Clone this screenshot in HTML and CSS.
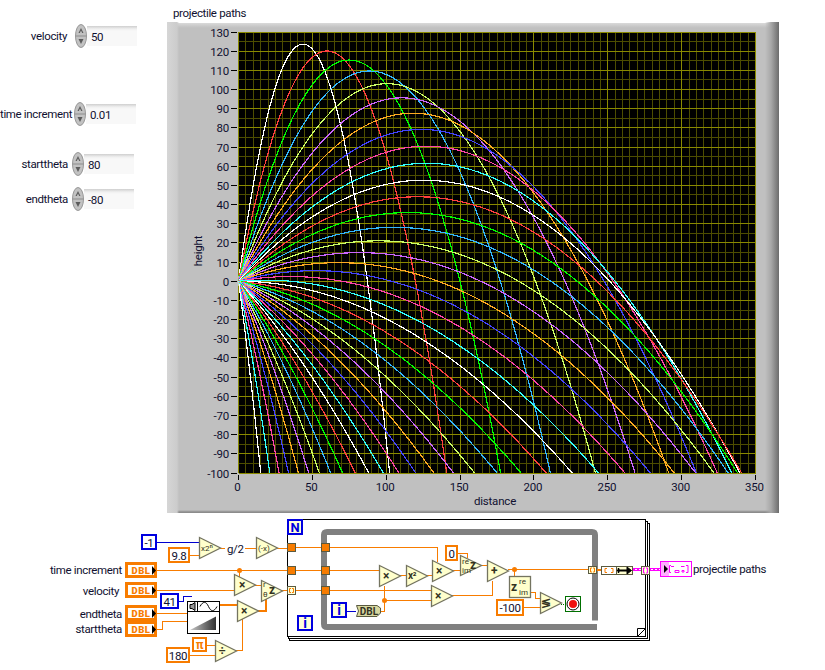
FILE: index.html
```html
<!DOCTYPE html>
<html lang="en">
<head>
<meta charset="utf-8">
<title>Projectile paths</title>
<link rel="stylesheet" href="styles.css">
</head>
<body>
<main class="page">
  <section class="front-panel">
    <div class="controls">
      <div class="control control-velocity">
        <label class="control-label">velocity</label>
        <span class="spinner"><svg viewBox="0 0 12 24" width="12" height="24"><ellipse class="spin-body" cx="6" cy="12" rx="5.500" ry="11.500"/><path class="spin-line" d="M1 12H11"/><path class="spin-arrow" d="M6 4L3.500 9H4.800L6 6.500L7.200 9H8.500Z"/><path class="spin-arrow" d="M6 20L3.500 15H8.500Z"/></svg></span>
        <span class="numeric">50</span>
      </div>
      <div class="control control-time">
        <label class="control-label">time increment</label>
        <span class="spinner"><svg viewBox="0 0 12 24" width="12" height="24"><ellipse class="spin-body" cx="6" cy="12" rx="5.500" ry="11.500"/><path class="spin-line" d="M1 12H11"/><path class="spin-arrow" d="M6 4L3.500 9H4.800L6 6.500L7.200 9H8.500Z"/><path class="spin-arrow" d="M6 20L3.500 15H8.500Z"/></svg></span>
        <span class="numeric">0.01</span>
      </div>
      <div class="control control-start">
        <label class="control-label">starttheta</label>
        <span class="spinner"><svg viewBox="0 0 12 24" width="12" height="24"><ellipse class="spin-body" cx="6" cy="12" rx="5.500" ry="11.500"/><path class="spin-line" d="M1 12H11"/><path class="spin-arrow" d="M6 4L3.500 9H4.800L6 6.500L7.200 9H8.500Z"/><path class="spin-arrow" d="M6 20L3.500 15H8.500Z"/></svg></span>
        <span class="numeric">80</span>
      </div>
      <div class="control control-end">
        <label class="control-label">endtheta</label>
        <span class="spinner"><svg viewBox="0 0 12 24" width="12" height="24"><ellipse class="spin-body" cx="6" cy="12" rx="5.500" ry="11.500"/><path class="spin-line" d="M1 12H11"/><path class="spin-arrow" d="M6 4L3.500 9H4.800L6 6.500L7.200 9H8.500Z"/><path class="spin-arrow" d="M6 20L3.500 15H8.500Z"/></svg></span>
        <span class="numeric">-80</span>
      </div>
    </div>
    <div class="graph">
      <div class="graph-title">projectile paths</div>
      <div class="graph-frame">
        <svg id="plot" class="plot" viewBox="167 22 612 491" width="612" height="491" xmlns="http://www.w3.org/2000/svg"></svg>
      </div>
    </div>
  </section>

  <section class="diagram">
    <svg class="diagram-svg" viewBox="0 515 825 155" width="825" height="155" xmlns="http://www.w3.org/2000/svg">
      <defs>
        <linearGradient id="ramp-fill" x1="0" x2="1" y1="0" y2="0">
          <stop offset="0" stop-color="#c8c8c8"/>
          <stop offset="1" stop-color="#303030"/>
        </linearGradient>
      </defs>
      <!-- for loop frame stack -->
      <rect class="frame" x="289.500" y="523.500" width="360" height="117"/>
      <rect class="frame" x="288.500" y="521.500" width="359" height="117"/>
      <rect class="frame" x="287.500" y="519.500" width="358" height="117"/>
      <path class="frame-fold" d="M637.500 636.500V628.500H645.500L637.500 636.500Z"/>

      <!-- while loop -->
      <path class="while" d="M595 620.500V535Q595 532 592 532H327Q324 532 324 535V624Q324 627 327 627H597"/>

      <!-- wires: outer, left of diagram -->
      <path class="w-blue" d="M157 542.500H199M179 601.500H183.500V596.500H192"/>
      <path class="w-blue" d="M347 611.500H356"/>
      <path class="w-or" d="M190 555.500H199M220 548.500H225M245 548.500H256M277 548.500H287"/>
      <path class="w-or" d="M157 570.500H287M239.500 570.500V577M157 590.500H234M255 585.500H261M282 590.500H287"/>
      <path class="w-or" d="M157 613.500H187M157 629.500H162.500V621.500H187"/>
      <path class="w-or" d="M207 645.500H215M190 655.500H215M236 650.500H242.500V618"/>
      <path class="w-or-thick" d="M219 605H237M258 610.500H266V598"/>

      <!-- wires inside loops -->
      <path class="w-or" d="M295 547.500H437.500V562M295 570.500H379M295 590.500H431"/>
      <path class="w-or" d="M400 575.500H406M427 575.500H432M453 570.500H460M458 553.500H467.500V558M481 565.500H487"/>
      <path class="w-or" d="M384.500 586V611.500H381M384.500 600.500H431"/>
      <path class="w-or" d="M452 595.500H492.500V581"/>
      <path class="w-or" d="M508 569.500H588M514.500 569.500V576"/>
      <path class="w-or" d="M531 592.500H535.500V598H540M524 607.500H540"/>
      <path class="w-green" d="M561 604.500H565"/>
      <path class="w-or-thick" d="M597 569.500H601"/>
      <path class="w-pink" d="M633 568.500H641M633 570.500H641M649 568.500H660M649 570.500H660"/>
      <path class="w-pink-dash" d="M633 569.500H641M649 569.500H660"/>

      <circle class="junction" cx="239.500" cy="570.500" r="2.500"/>
      <circle class="junction" cx="384.500" cy="600.500" r="2.500"/>
      <circle class="junction" cx="514.500" cy="569.500" r="2.500"/>

      <!-- constants -->
      <rect class="const-blue" x="142" y="535" width="14" height="14"/>
      <text class="t-const" x="149" y="546.500" text-anchor="middle">-1</text>
      <rect class="const-or" x="169" y="548" width="20" height="14"/>
      <text class="t-const" x="179" y="559.500" text-anchor="middle">9.8</text>
      <rect class="const-blue" x="161" y="594" width="17" height="14"/>
      <text class="t-const" x="169.500" y="605.500" text-anchor="middle">41</text>
      <rect class="const-or" x="193" y="638" width="13" height="13"/>
      <text class="t-pi" x="199.500" y="649" text-anchor="middle">π</text>
      <rect class="const-or" x="167" y="648" width="22" height="14"/>
      <text class="t-const" x="178" y="659.500" text-anchor="middle">180</text>
      <rect class="const-or" x="446" y="546" width="11" height="14"/>
      <text class="t-const" x="451.500" y="557.500" text-anchor="middle">0</text>
      <rect class="const-or" x="497" y="600" width="26" height="15"/>
      <text class="t-const" x="510" y="612" text-anchor="middle">-100</text>

      <!-- DBL terminals -->
      <g class="dbl"><rect class="dbl-out" x="125" y="562" width="32" height="16"/><rect class="dbl-in" x="128" y="565" width="26" height="10"/><text class="t-dbl" x="141" y="574" text-anchor="middle">DBL</text><path class="dbl-arrow" d="M152 566L156 570.500L152 575Z"/></g>
      <g class="dbl"><rect class="dbl-out" x="125" y="582" width="32" height="16"/><rect class="dbl-in" x="128" y="585" width="26" height="10"/><text class="t-dbl" x="141" y="594" text-anchor="middle">DBL</text><path class="dbl-arrow" d="M152 586L156 590.500L152 595Z"/></g>
      <g class="dbl"><rect class="dbl-out" x="125" y="605" width="32" height="16"/><rect class="dbl-in" x="128" y="608" width="26" height="10"/><text class="t-dbl" x="141" y="617" text-anchor="middle">DBL</text><path class="dbl-arrow" d="M152 609L156 613.500L152 618Z"/></g>
      <g class="dbl"><rect class="dbl-out" x="125" y="621" width="32" height="16"/><rect class="dbl-in" x="128" y="624" width="26" height="10"/><text class="t-dbl" x="141" y="633" text-anchor="middle">DBL</text><path class="dbl-arrow" d="M152 625L156 629.500L152 634Z"/></g>

      <text class="t-label" x="122" y="574" text-anchor="end">time increment</text>
      <text class="t-label" x="119" y="595" text-anchor="end">velocity</text>
      <text class="t-label" x="122" y="618" text-anchor="end">endtheta</text>
      <text class="t-label" x="122" y="633" text-anchor="end">starttheta</text>
      <text class="t-label" x="227" y="553">g/2</text>
      <text class="t-label" x="693" y="573">projectile paths</text>

      <!-- triangles -->
      <polygon class="node" points="199.500,537.500 220.500,548 199.500,558.500"/>
      <text class="t-node" x="201" y="551">x2ⁿ</text>
      <polygon class="node" points="256.500,537.500 277.500,548 256.500,558.500"/>
      <text class="t-node" x="258" y="551">(-x)</text>
      <polygon class="node" points="234.500,574.500 255.500,585 234.500,595.500"/>
      <text class="t-op" x="242" y="589" text-anchor="middle">×</text>
      <polygon class="node" points="261.500,580.500 282.500,591 261.500,601.500"/>
      <text class="t-node" x="263" y="587">r</text>
      <text class="t-node" x="263" y="597">θ</text>
      <text class="t-op" x="272" y="594" text-anchor="middle">z</text>
      <polygon class="node" points="237.500,600.500 258.500,611 237.500,621.500"/>
      <text class="t-op" x="244" y="615" text-anchor="middle">×</text>
      <polygon class="node" points="215.500,640.500 236.500,651 215.500,661.500"/>
      <text class="t-op" x="222" y="655" text-anchor="middle">÷</text>
      <polygon class="node" points="379.500,565.500 400.500,576 379.500,586.500"/>
      <text class="t-op" x="386" y="580" text-anchor="middle">×</text>
      <polygon class="node" points="406.500,565.500 427.500,576 406.500,586.500"/>
      <text class="t-op-sm" x="408" y="579">x²</text>
      <polygon class="node" points="432.500,560.500 453.500,571 432.500,581.500"/>
      <text class="t-op" x="439" y="575" text-anchor="middle">×</text>
      <polygon class="node" points="431.500,585.500 452.500,596 431.500,606.500"/>
      <text class="t-op" x="438" y="600" text-anchor="middle">×</text>
      <polygon class="node" points="460.500,555.500 481.500,565.500 460.500,575.500"/>
      <text class="t-node" x="462" y="564">re</text>
      <text class="t-node" x="462" y="573">im</text>
      <text class="t-op" x="473" y="569" text-anchor="middle">z</text>
      <polygon class="node" points="487.500,560.500 508.500,571 487.500,581.500"/>
      <text class="t-op" x="494" y="575" text-anchor="middle">+</text>
      <polygon class="node" points="540.500,592.500 561.500,603 540.500,613.500"/>
      <text class="t-op" x="546" y="607" text-anchor="middle">≶</text>

      <!-- complex to re/im -->
      <rect class="node" x="509.500" y="576.500" width="21" height="21"/>
      <text class="t-op" x="514" y="591" text-anchor="middle">z</text>
      <text class="t-node" x="519" y="584">re</text>
      <text class="t-node" x="519" y="595">im</text>

      <!-- ramp pattern -->
      <rect class="ramp-box" x="187.500" y="601.500" width="32" height="32"/>
      <path class="ramp-line" d="M187.500 611.500H219.500M197.500 601.500V611.500"/>
      <path class="ramp-icon" d="M190 604.500H192L195 602.500V610.500L192 608.500H190Z"/>
      <path class="ramp-wave" d="M200 606.500C203 601 206 601 208.500 606.500S214 612 217 606.500"/>
      <path class="ramp-wedge" d="M190 630L216 616.500V630Z"/>

      <!-- loop terminals -->
      <rect class="n-box" x="288" y="520" width="14" height="14"/>
      <text class="t-n" x="295" y="532" text-anchor="middle">N</text>
      <rect class="n-box" x="298" y="616" width="14" height="14"/>
      <text class="t-i" x="305" y="628" text-anchor="middle">i</text>
      <rect class="n-box" x="332" y="603" width="14" height="14"/>
      <text class="t-i" x="339" y="615" text-anchor="middle">i</text>

      <!-- tunnels -->
      <rect class="tunnel" x="287.500" y="543.500" width="8" height="8"/>
      <rect class="tunnel" x="287.500" y="566.500" width="8" height="8"/>
      <rect class="tunnel-idx" x="287.500" y="586.500" width="8" height="8"/>
      <path class="idx-mark" d="M291 588.500H289.500V592.500H291M292 588.500H293.500V592.500H292"/>
      <rect class="tunnel" x="321.500" y="543.500" width="8" height="8"/>
      <rect class="tunnel" x="321.500" y="566.500" width="8" height="8"/>
      <rect class="tunnel" x="321.500" y="586.500" width="8" height="8"/>
      <rect class="tunnel-idx" x="588.500" y="566.500" width="8" height="7"/>
      <path class="idx-mark" d="M592 568H590.500V572H592M593 568H594.500V572H593"/>
      <rect class="tunnel-idx" x="641.500" y="566.500" width="8" height="8"/>
      <path class="idx-pink" d="M645 568H643.500V573H645M646 568H647.500V573H646"/>

      <!-- to double conversion -->
      <path class="conv" d="M356.500 605.500H377L380.500 608V613L377 616.500H356.500L358.500 611Z"/>
      <text class="t-conv" x="369" y="615" text-anchor="middle">DBL</text>

      <!-- build waveform -->
      <rect class="build-a" x="601.500" y="566.500" width="15" height="8"/>
      <path class="idx-mark" d="M607 568.500H605V572.500H607M611 568.500H613V572.500H611"/>
      <rect class="build-b" x="616.500" y="566.500" width="16" height="8"/>
      <path class="build-arrow" d="M617 570.500H618V568.500H619V570H627V567L631.500 570.500L627 574V571H619V572.500H618V570.500H617Z"/>

      <!-- stop -->
      <rect class="stop-box" x="565.500" y="596.500" width="15" height="15"/>
      <circle class="stop-ring" cx="573" cy="604" r="6"/>
      <circle class="stop-dot" cx="573" cy="604" r="4"/>

      <!-- indicator -->
      <rect class="ind-box" x="660.500" y="561.500" width="31" height="15"/>
      <rect class="ind-fill" x="661" y="562" width="8" height="14"/>
      <path class="dbl-arrow-k" d="M664 565L668 569L664 573Z"/>
      <path class="ind-marks" d="M671 565.500H669.500V572.500H671M671 566.500H674M675 570.500H679V572.500H675ZM681 566.500H684.500M682 570.500H684V572H682ZM686 565.500H688V572.500H686"/>
    </svg>
  </section>
</main>
<script src="app.js"></script>
</body>
</html>
```

FILE: styles.css
```css
* { box-sizing: border-box; }
html, body { margin: 0; padding: 0; background: #fff; }
body { width: 825px; height: 670px; overflow: hidden; font-family: Roboto, "Liberation Sans", Arial, sans-serif; font-size: 11.5px; letter-spacing: -0.35px; color: #101030; }
.page { display: flex; flex-direction: column; }

.front-panel { display: flex; height: 515px; }
.controls { width: 167px; display: flex; flex-direction: column; padding-top: 24px; }
.control { display: flex; align-items: center; height: 24px; }
.control-label { text-align: right; white-space: nowrap; flex: none; }
.control-velocity .control-label { width: 67px; margin-right: 8px; }
.control-time .control-label { width: 71px; margin-right: 3px; }
.control-start .control-label, .control-end .control-label { width: 68px; margin-right: 4px; }
.control-time { margin-top: 54px; }
.control-start { margin-top: 26px; }
.control-end { margin-top: 11px; }
.spinner { display: block; width: 12px; height: 24px; flex: none; }
.spin-body { fill: #c2c2c2; stroke: #969696; stroke-width: 1; }
.spin-line { stroke: #8c8c8c; stroke-width: 1; }
.spin-arrow { fill: #5c5c5c; }
.numeric { display: block; width: 50px; height: 20px; padding: 4px 0 0 4px; background: linear-gradient(#cfcfcf 0, #f0f0f0 3px, #f8f8f8 5px); line-height: 14px; }

.graph { width: 612px; }
.graph-title { height: 22px; padding: 6px 0 0 6px; line-height: 14px; }
.graph-frame {
  width: 612px; height: 491px;
  background:
    linear-gradient(to right, #d6d6d6 0, #cccccc 10px, rgba(192,192,192,0) 12px, rgba(192,192,192,0) 598px, #a8a8a8 604px, #6c6c6c 612px),
    linear-gradient(to bottom, #ffffff 0, #ffffff 1px, #dadada 1px, #c4c4c4 5px, #c0c0c0 6px, #c0c0c0 488px, #8c8c8c 490px);
}
.plot { display: block; }
.tick { stroke: #000; stroke-width: 1; shape-rendering: crispEdges; }
.tick-label { font: 11.5px Roboto, "Liberation Sans", Arial, sans-serif; letter-spacing: -0.2px; fill: #101030; }
.grid-minor { stroke: #4d4d00; stroke-width: 1; shape-rendering: crispEdges; }
.grid-major { stroke: #8a8a00; stroke-width: 1; shape-rendering: crispEdges; }
.plot-bg { fill: #000; }
.trace { fill: none; stroke-width: 1.2; shape-rendering: crispEdges; }

.diagram { height: 155px; }
.diagram-svg { display: block; }
.diagram-svg text { font-family: Roboto, "Liberation Sans", Arial, sans-serif; }
.frame { fill: #fff; stroke: #000; stroke-width: 1; }
.frame-fold { fill: #fff; stroke: #000; stroke-width: 1; }
.while { fill: none; stroke: #808080; stroke-width: 6; }
.w-blue { fill: none; stroke: #0000d0; stroke-width: 1; shape-rendering: crispEdges; }
.w-or { fill: none; stroke: #f87c00; stroke-width: 1; shape-rendering: crispEdges; }
.w-or-thick { fill: none; stroke: #f87c00; stroke-width: 2; shape-rendering: crispEdges; }
.w-green { fill: none; stroke: #007000; stroke-width: 1; stroke-dasharray: 1 1; }
.w-pink { fill: none; stroke: #ff00ff; stroke-width: 1; shape-rendering: crispEdges; }
.w-pink-dash { fill: none; stroke: #ff00ff; stroke-width: 1; stroke-dasharray: 2 2; shape-rendering: crispEdges; }
.junction { fill: #f87c00; }
.const-blue { fill: #fff; stroke: #0000e0; stroke-width: 2; }
.const-or { fill: #fff; stroke: #f87c00; stroke-width: 2; }
.t-const { font-size: 11.5px; fill: #101030; }
.t-pi { font-size: 12px; font-weight: bold; fill: #f87c00; }
.dbl-out { fill: #f87c00; }
.dbl-in { fill: #fff; }
.t-dbl { font-size: 9.5px; font-weight: 900; fill: #f87c00; letter-spacing: 0.5px; }
.dbl-arrow { fill: #000; }
.t-label { font-size: 11.5px; fill: #101030; }
.node { fill: #ffffcc; stroke: #747460; stroke-width: 1.3; }
.t-node { font-size: 8px; fill: #33331f; letter-spacing: 0; }
.t-op { font-size: 12px; font-weight: bold; fill: #33331f; }
.t-op-sm { font-size: 10px; font-weight: bold; fill: #33331f; }
.ramp-box { fill: #fff; stroke: #000; stroke-width: 1; }
.ramp-line { fill: none; stroke: #000; stroke-width: 1; }
.ramp-icon { fill: #999; stroke: #000; stroke-width: 1; }
.ramp-wave { fill: none; stroke: #000; stroke-width: 1; }
.ramp-wedge { fill: url(#ramp-fill); }
.n-box { fill: #ffffd8; stroke: #0000e0; stroke-width: 2; }
.t-n { font-size: 13px; font-weight: bold; fill: #0000e0; }
.t-i { font-size: 14px; font-weight: bold; fill: #0000e0; }
.tunnel { fill: #f87c00; stroke: #5a5a40; stroke-width: 1; }
.tunnel-idx { fill: #ffffd8; stroke: #5a5a40; stroke-width: 1; }
.idx-mark { fill: none; stroke: #f87c00; stroke-width: 1; }
.idx-pink { fill: none; stroke: #ff00ff; stroke-width: 1; }
.conv { fill: #d8d8a0; stroke: #5a5a40; stroke-width: 1; }
.t-conv { font-size: 10px; font-weight: bold; fill: #33331f; letter-spacing: 0; }
.build-a { fill: #fff; stroke: #5a5a40; stroke-width: 1; }
.build-b { fill: #ffffd0; stroke: #5a5a40; stroke-width: 1; }
.build-arrow { fill: #000; stroke: #000; stroke-width: 1; }
.stop-box { fill: #fff; stroke: #007000; stroke-width: 1; }
.stop-ring { fill: #fff; stroke: #000; stroke-width: 1; }
.stop-dot { fill: #f01010; }
.ind-box { fill: #fff; stroke: #ff00ff; stroke-width: 1; }
.ind-fill { fill: #ffb0ff; }
.dbl-arrow-k { fill: #000; }
.ind-marks { fill: none; stroke: #ff00ff; stroke-width: 1; }
```

FILE: app.js
```js
(function () {
  var NS = 'http://www.w3.org/2000/svg';
  var svg = document.getElementById('plot');
  var L = 238.5, R = 755.5, T = 32, B = 473;
  var sx = (R - L) / 350, sy = (B - T) / 230;
  function px(x) { return L + x * sx; }
  function py(y) { return B - (y + 100) * sy; }
  function el(name, attrs, text, parent) {
    var e = document.createElementNS(NS, name);
    for (var k in attrs) e.setAttribute(k, attrs[k]);
    if (text != null) e.textContent = text;
    (parent || svg).appendChild(e);
    return e;
  }
  var defs = el('defs', {});
  var clip = el('clipPath', { id: 'plot-clip' }, null, defs);
  el('rect', { x: L, y: T, width: R - L, height: B - T }, null, clip);

  el('rect', { class: 'plot-bg', x: L, y: T, width: R - L, height: B - T });

  function snap(v) { return Math.floor(v) + 0.5; }
  var x, y;
  for (x = 0; x <= 350; x += 5) {
    var xp = snap(px(x));
    el('line', { class: 'grid-minor', x1: xp, x2: xp, y1: T, y2: B });
  }
  for (y = -100; y <= 130; y += 5) {
    var yp = snap(py(y));
    el('line', { class: 'grid-minor', y1: yp, y2: yp, x1: L, x2: R });
  }
  for (x = 0; x <= 350; x += 50) {
    el('line', { class: 'grid-major', x1: snap(px(x)), x2: snap(px(x)), y1: T, y2: B });
    el('line', { class: 'tick', x1: snap(px(x)), x2: snap(px(x)), y1: B + 2, y2: B + 7 });
    el('text', { class: 'tick-label', x: px(x) - 1, y: B + 18, 'text-anchor': 'middle' }, String(x));
  }
  for (y = -100; y <= 130; y += 10) {
    el('line', { class: 'grid-major', y1: snap(py(y)), y2: snap(py(y)), x1: L, x2: R });
    el('line', { class: 'tick', y1: snap(py(y)), y2: snap(py(y)), x1: 231, x2: 237 });
    el('text', { class: 'tick-label', x: 229, y: py(y) + 4.5, 'text-anchor': 'end' }, String(y));
  }

  var colours = ['#ffffff', '#ff4040', '#00ff00', '#33b8ff', '#ccff66', '#cc66ff', '#ffaa22', '#4444ff', '#ff44aa', '#33ffff'];
  var g = el('g', { 'clip-path': 'url(#plot-clip)' });
  var v = 50, n = 41;
  for (var i = 0; i < n; i++) {
    var theta = (80 - i * 4) * Math.PI / 180;
    var pts = [];
    for (var t = 0; t < 30; t += 0.05) {
      var xx = v * Math.cos(theta) * t;
      var yy = v * Math.sin(theta) * t - 4.9 * t * t;
      pts.push(px(xx).toFixed(1) + ',' + py(yy).toFixed(1));
      if (yy < -104 || xx > 356) break;
    }
    el('polyline', { class: 'trace', points: pts.join(' '), stroke: colours[i % 10] }, null, g);
  }

  el('text', { class: 'tick-label', x: 495, y: 505, 'text-anchor': 'middle' }, 'distance');
  el('text', { class: 'tick-label', x: 202, y: 251, 'text-anchor': 'middle', transform: 'rotate(-90 202 251)' }, 'height');
})();
```
